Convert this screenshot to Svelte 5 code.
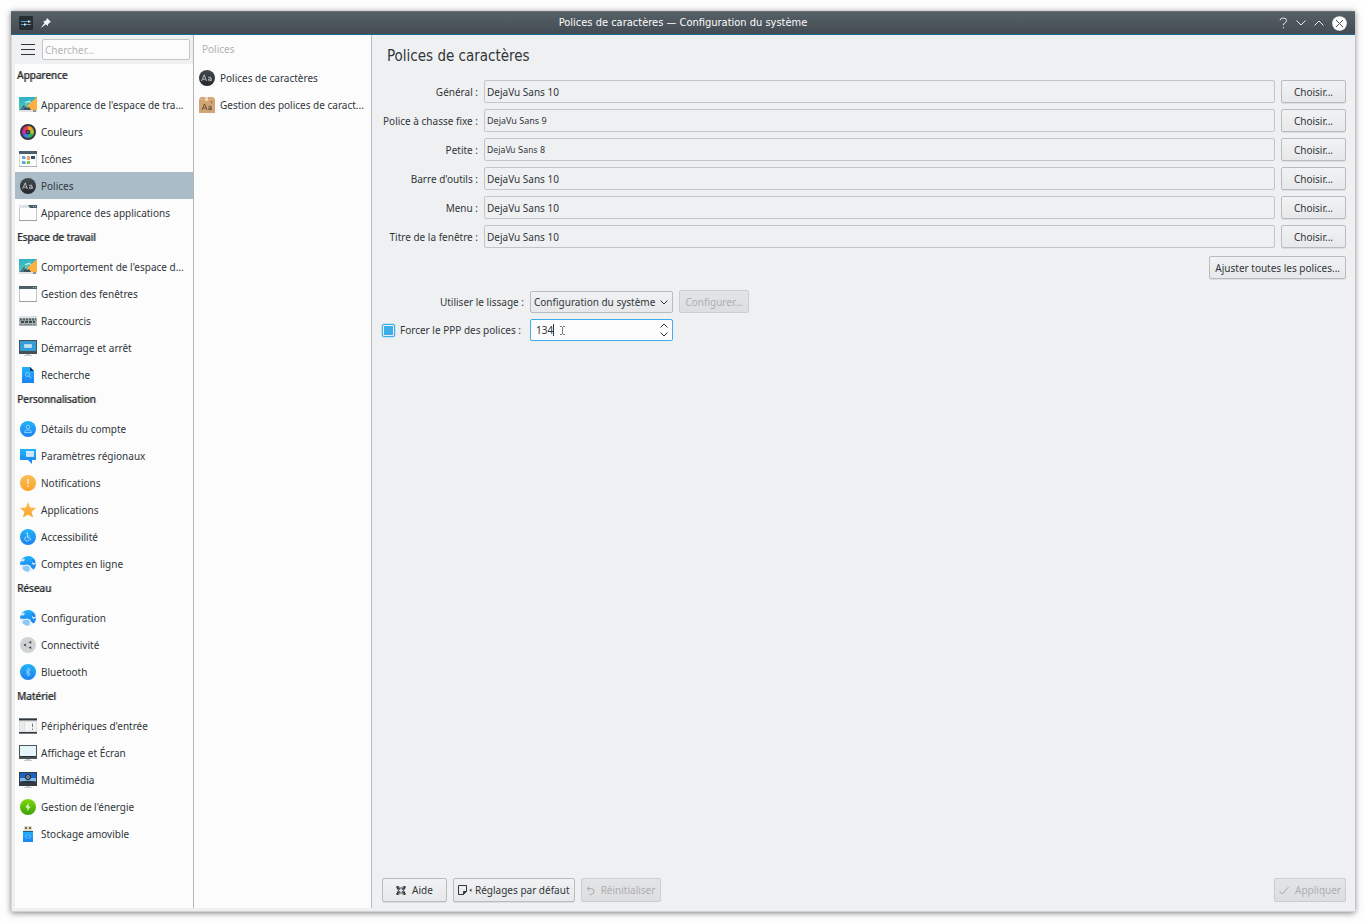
<script>
  const sections = [
    {
      title: 'Apparence',
      items: [
        { icon: 'wallpaper', label: "Apparence de l'espace de tra..." },
        { icon: 'colors', label: 'Couleurs' },
        { icon: 'icons', label: 'Icônes' },
        { icon: 'fonts', label: 'Polices', current: true },
        { icon: 'appstyle', label: 'Apparence des applications' }
      ]
    },
    {
      title: 'Espace de travail',
      items: [
        { icon: 'wallpaper', label: "Comportement de l'espace d..." },
        { icon: 'window', label: 'Gestion des fenêtres' },
        { icon: 'keyboard', label: 'Raccourcis' },
        { icon: 'startup', label: 'Démarrage et arrêt' },
        { icon: 'search', label: 'Recherche' }
      ]
    },
    {
      title: 'Personnalisation',
      items: [
        { icon: 'user', label: 'Détails du compte' },
        { icon: 'locale', label: 'Paramètres régionaux' },
        { icon: 'notify', label: 'Notifications' },
        { icon: 'star', label: 'Applications' },
        { icon: 'access', label: 'Accessibilité' },
        { icon: 'globe', label: 'Comptes en ligne' }
      ]
    },
    {
      title: 'Réseau',
      items: [
        { icon: 'globe', label: 'Configuration' },
        { icon: 'connect', label: 'Connectivité' },
        { icon: 'bluetooth', label: 'Bluetooth' }
      ]
    },
    {
      title: 'Matériel',
      items: [
        { icon: 'input', label: "Périphériques d'entrée" },
        { icon: 'screen', label: 'Affichage et Écran' },
        { icon: 'media', label: 'Multimédia' },
        { icon: 'power', label: "Gestion de l'énergie" },
        { icon: 'usb', label: 'Stockage amovible' }
      ]
    }
  ];

  const fonts = [
    { id: 'general', label: 'Général :', value: 'DejaVu Sans 10', size: 'normal' },
    { id: 'fixed', label: 'Police à chasse fixe :', value: 'DejaVu Sans 9', size: 'medium' },
    { id: 'small', label: 'Petite :', value: 'DejaVu Sans 8', size: 'small' },
    { id: 'toolbar', label: "Barre d'outils :", value: 'DejaVu Sans 10', size: 'normal' },
    { id: 'menu', label: 'Menu :', value: 'DejaVu Sans 10', size: 'normal' },
    { id: 'title', label: 'Titre de la fenêtre :', value: 'DejaVu Sans 10', size: 'normal' }
  ];

  let dpi = $state(134);
  let force = $state(true);
</script>

{#snippet icon(name)}
  <svg class="icon" viewBox="0 0 18 16" width="18" height="16" aria-hidden="true">
    {#if name === 'wallpaper'}
      <rect width="18" height="15" fill="url(#teal)" />
      <path d="M18 0V13H10L8 9Z" fill="#fdb03c" />
      <path d="M1 13L5 8L8 11L10 10L12 13Z" fill="#3b5266" />
      <path d="M2 14L12 2" stroke="#8fe0d6" stroke-width="1" opacity=".6" />
      <path d="M6 5.5L10 4.5L12 5.5" stroke="#e6fbfa" stroke-width="1" fill="none" />
      <rect y="13" width="18" height="2" fill="#dfe3e5" />
      <path d="M14 14H17" stroke="#3c4347" />
    {:else if name === 'colors'}
      <circle cx="9" cy="8" r="8" fill="#34373c" />
      <path d="M9 8V2A6 6 0 0 1 14.2 5Z" fill="#f5a623" />
      <path d="M9 8L14.2 5A6 6 0 0 1 14.2 11Z" fill="#a8c93a" />
      <path d="M9 8L14.2 11A6 6 0 0 1 9 14Z" fill="#2fae6a" />
      <path d="M9 8V14A6 6 0 0 1 3.8 11Z" fill="#3c7de0" />
      <path d="M9 8L3.8 11A6 6 0 0 1 3.8 5Z" fill="#c42fb4" />
      <path d="M9 8L3.8 5A6 6 0 0 1 9 2Z" fill="#e93a5e" />
      <circle cx="9" cy="8" r="2.3" fill="#2b2e33" />
      <circle cx="9" cy="8" r="1" fill="#7b6b84" />
    {:else if name === 'icons'}
      <rect x=".5" y=".5" width="17" height="15" fill="#fafbfb" stroke="#cfd4d6" />
      <rect width="18" height="3" fill="#4d6069" />
      <path d="M0 15.5H18" stroke="#aab2b5" />
      <path d="M3 5H6V8H3ZM3 10H6V13H3Z" fill="#63a4dc" />
      <path d="M6 6H7V8H6ZM6 11H7V13H6Z" fill="#8fbfe8" />
      <rect x="8" y="5" width="3" height="4" fill="#f59b6c" />
      <rect x="8" y="10" width="3" height="3" fill="#80c342" />
      <rect x="12" y="5" width="4" height="3" fill="#31505f" />
    {:else if name === 'fonts'}
      <circle cx="9" cy="8" r="8" fill="url(#dark)" />
      <path d="M3.5 11L6.3 4.8L8.4 11M4.8 9.2H7.6" fill="none" stroke="#c2c6c9" stroke-width=".9" />
      <path d="M10 7.4Q13.2 6 13.2 8.5V11M13.2 8.8Q10 8.6 10.2 10Q10.8 11.6 13.2 10" fill="none" stroke="#c2c6c9" stroke-width=".9" />
    {:else if name === 'appstyle' || name === 'window'}
      <rect x=".5" y=".5" width="17" height="15" fill="#fdfdfd" stroke="#c3c8ca" />
      <rect width="18" height="3" fill={name === 'window' ? '#4d6069' : '#dfe3e5'} />
      {#if name === 'appstyle'}<path d="M9 0H18V3H11Z" fill="#4d6069" />{/if}
      <path d="M14 1.5H15M16 1.5H17" stroke="#a9b7bd" />
      <path d="M0 15.5H18" stroke="#99a2a6" />
    {:else if name === 'keyboard'}
      <rect y="3" width="18" height="2" fill="#dfe6e6" />
      <rect y="5" width="18" height="8" fill="#a9b1b2" />
      <path d="M1 6.5H17" stroke="#566164" stroke-width="2" stroke-dasharray="2 1" />
      <path d="M2 9H16" stroke="#414b4e" stroke-width="2" stroke-dasharray="3 1" />
      <path d="M1 11.5H4M5 11.5H13M14 11.5H17" stroke="#7b8688" />
      <path d="M14 3.5H15M16 3.5H17" stroke="#8fd1b8" />
    {:else if name === 'startup'}
      <rect width="18" height="14" fill="#4a4f54" />
      <rect x="1" y="1" width="16" height="10" fill="#329fd9" />
      <rect x="5" y="4" width="8" height="4" fill="#a9d5ee" />
      <path d="M6 6H12" stroke="#e9f5fb" />
      <path d="M7 14H11V15H13V16H5V15H7Z" fill="#c5cacc" />
    {:else if name === 'search'}
      <path d="M3 0H11L15 4V16H3Z" fill="url(#blue)" />
      <path d="M11 0L15 4H11Z" fill="#1c3144" />
      <circle cx="8.5" cy="7.5" r="2" fill="none" stroke="#9bdcff" stroke-width=".8" />
      <path d="M10 9L12.2 11.2" stroke="#9bdcff" stroke-width=".8" />
    {:else if name === 'user'}
      <circle cx="9" cy="8" r="8" fill="url(#blue)" />
      <circle cx="9" cy="6" r="1.8" fill="none" stroke="#a0d8ff" stroke-width=".8" />
      <path d="M5.5 11.5Q5.5 9 8 9H10Q12.5 9 12.5 11.5Z" fill="none" stroke="#a0d8ff" stroke-width=".8" />
    {:else if name === 'locale'}
      <path d="M1 1H17V12H13V16L9 12H1Z" fill="url(#blue)" />
      <rect x="7" y="3" width="8" height="6" fill="#bfe0fb" />
      <path d="M7 4H15M7 7H15" stroke="#e4f2fd" />
    {:else if name === 'notify'}
      <circle cx="9" cy="8" r="8" fill="url(#amber)" />
      <path d="M9 4V9M9 10.5V12" stroke="#fff1d6" stroke-width="1.4" />
    {:else if name === 'star'}
      <path d="M9 0L11.2 5.5L17 6L12.6 9.8L14 15.5L9 12.4L4 15.5L5.4 9.8L1 6L6.8 5.5Z" fill="url(#amber)" />
    {:else if name === 'access'}
      <circle cx="9" cy="8" r="8" fill="url(#blue)" />
      <circle cx="8.2" cy="4.4" r=".9" fill="#b9e4ff" />
      <path d="M8.4 5.5V8.8H10.6L12 11.2M8.5 7H10.6M7.2 7.6A2.3 2.3 0 1 0 10.2 10.6" fill="none" stroke="#b9e4ff" stroke-width=".9" />
    {:else if name === 'globe'}
      <circle cx="9" cy="8" r="8" fill="#e3f2fc" />
      <path d="M2.4 3.6Q5 0 10 0Q14.6 .8 16.4 5L13 6.4L14 9L17 7.5Q17.2 11 14.8 13.4L12.6 12L11 9.6L8 8.6L5 9L1 8.4Q1 6.6 1.6 5.2L5 5.6Z" fill="url(#blue)" />
      <path d="M4.4 10.2L9 9.8L11 12L9.8 15.8Q5.8 15.8 3.4 12.8Z" fill="#8cc8f7" />
      <path d="M13 3L16 4.5L16.6 7L14 7Z" fill="#2384ea" />
      <path d="M2 3.8L5 2.4L6 4L4 5.2Z" fill="#d9edfb" />
    {:else if name === 'connect'}
      <circle cx="9" cy="8" r="8" fill="#d0d4d6" />
      <path d="M5 8L11 4.8M5 8L11 11.2" stroke="#bcc2c5" />
      <path d="M4.8 8L6.5 7V9ZM10.2 5.4L12 4.4V6.2ZM10.2 10.6L12 9.8V11.6Z" fill="#31373b" stroke="#31373b" stroke-width=".5" />
    {:else if name === 'bluetooth'}
      <circle cx="9" cy="8" r="8" fill="url(#blue)" />
      <path d="M6.8 5.8L11.2 10.2L9 12.2V3.8L11.2 5.8L6.8 10.2" fill="none" stroke="#a9dcff" stroke-width=".8" />
    {:else if name === 'input'}
      <rect width="18" height="16" fill="#dcdfe0" />
      <rect width="18" height="2.4" fill="#31363b" />
      <path d="M0 .5H18" stroke="#6b7a80" />
      <rect x="1" y="4" width="4" height="9" fill="#e9ebeb" />
      <rect x="6" y="4" width="11" height="9" fill="#f3f4f4" />
      <path d="M13.5 5.5V9M13.5 10.5V12" stroke="#777e82" />
      <path d="M0 14.8H18" stroke="#353b40" stroke-width="1.6" />
    {:else if name === 'screen'}
      <rect width="18" height="14" fill="#4d5358" />
      <rect x="1" y="1" width="16" height="10" fill="#e5f6fb" />
      <path d="M1 11.5H17" stroke="#2c3034" />
      <path d="M7 14H11V15H13V16H5V15H7Z" fill="#c5cacc" />
    {:else if name === 'media'}
      <rect width="18" height="14" fill="#353b41" />
      <rect x="1" y="1" width="16" height="6" fill="#1d61c5" />
      <rect x="1" y="6" width="16" height="4" fill="#7eb9e8" />
      <path d="M1 11V9.6L9 8.8L17 9.6V11Z" fill="#273341" />
      <circle cx="9" cy="5" r="2.3" fill="#e8edf0" stroke="#20262b" stroke-width="1.3" />
      <path d="M8.4 3.8L10.6 5L8.4 6.2Z" fill="#20262b" />
      <path d="M7 14H11V15H13V16H5V15H7Z" fill="#c5cacc" />
    {:else if name === 'power'}
      <circle cx="9" cy="8" r="8" fill="url(#green)" />
      <path d="M9.6 4L6.4 8.6H8.6L8.2 12L11.6 7.4H9.4Z" fill="#e7fbd3" />
    {:else if name === 'usb'}
      <rect x="5" y="0" width="8" height="5" fill="#e2dfcf" />
      <path d="M6 1H8V3H6ZM10 1H12V3H10Z" fill="#6d664f" />
      <rect x="4" y="5" width="10" height="11" fill="url(#blue)" />
      <path d="M4 5.5H14" stroke="#265a86" />
      <path d="M8 8.5L6.5 10.5L8 12.5M10 8.5L11.5 10.5L10 12.5" fill="none" stroke="#8ad3ff" stroke-width=".8" />
    {:else if name === 'fontbox'}
      <path d="M1 2L3 0H15L17 2V16H1Z" fill="#d3a574" />
      <path d="M1 2.5H17" stroke="#dcb184" />
      <rect x="7" y="0" width="3" height="4" fill="#f0d9b8" />
      <path d="M4 13L6.6 7L9 13M5 11H8.2" fill="none" stroke="#5b4a3a" stroke-width=".9" />
      <path d="M10.4 9.6Q13.2 8.2 13.2 10.5V13M13.2 11Q10 10.6 10.4 12.2Q11 13.6 13.2 12.2" fill="none" stroke="#5b4a3a" stroke-width=".9" />
      <path d="M13.5 4V6.5" stroke="#8d6d4c" />
    {/if}
  </svg>
{/snippet}

<svg class="defs" width="0" height="0" aria-hidden="true">
  <defs>
    <linearGradient id="teal" x2="0" y2="1"><stop stop-color="#2eb3c3" /><stop offset="1" stop-color="#5ac7b4" /></linearGradient>
    <linearGradient id="dark" x2="0" y2="1"><stop stop-color="#454b50" /><stop offset="1" stop-color="#24282c" /></linearGradient>
    <linearGradient id="blue" x2="0" y2="1"><stop stop-color="#1fb4f9" /><stop offset="1" stop-color="#1d80f0" /></linearGradient>
    <linearGradient id="amber" x2="0" y2="1"><stop stop-color="#fbbd55" /><stop offset="1" stop-color="#f9a52b" /></linearGradient>
    <linearGradient id="green" x2="0" y2="1"><stop stop-color="#7fd80b" /><stop offset="1" stop-color="#3d9f07" /></linearGradient>
  </defs>
</svg>

<div class="window">
  <header class="titlebar">
    <div class="side">
      <svg width="14" height="14" viewBox="0 0 14 14" aria-hidden="true">
        <rect width="14" height="14" rx="1" fill="#262d33" />
        <path d="M2 5.5H12M2 8.5H12" stroke="#83939d" />
        <path d="M2 5.5H8M2 8.5H5" stroke="#3daee9" />
        <path d="M9 4.5H10.5V6.5H9ZM5 7.5H6.5V9.5H5Z" fill="#fff" />
      </svg>
      <button class="plain" aria-label="Épingler">
        <svg width="10" height="10" viewBox="0 0 10 10"><path d="M6 0L10 4L8.6 4.4L7 6.2L6.8 8L4.8 6.2L.6 9.6L0 9.4L3.6 5L1.8 3.4L3.8 3.2L5.6 1.4Z" fill="#fcfcfc" /></svg>
      </button>
    </div>
    <h1>Polices de caractères — Configuration du système</h1>
    <div class="side controls">
      <button class="plain" aria-label="Aide contextuelle">
        <svg width="9" height="12" viewBox="0 0 9 12"><path d="M1 3.4Q1.2 1 4.2 1Q7.6 1 7.6 3.6Q7.6 5 5.6 6Q4.4 6.8 4.4 8.4M4.4 10V11.2" fill="none" stroke="#e6e8e9" /></svg>
      </button>
      <button class="plain" aria-label="Réduire">
        <svg width="10" height="6" viewBox="0 0 10 6"><path d="M.5 .5L5 5L9.5 .5" fill="none" stroke="#e6e8e9" /></svg>
      </button>
      <button class="plain" aria-label="Maximiser">
        <svg width="10" height="6" viewBox="0 0 10 6"><path d="M.5 5.5L5 1L9.5 5.5" fill="none" stroke="#e6e8e9" /></svg>
      </button>
      <button class="plain" aria-label="Fermer">
        <svg width="15" height="15" viewBox="0 0 15 15"><circle cx="7.5" cy="7.5" r="7.3" fill="#fcfcfc" /><path d="M4 4L11 11M11 4L4 11" stroke="#4b545b" /></svg>
      </button>
    </div>
  </header>

  <div class="body">
    <nav class="sidebar" aria-label="Catégories">
      <div class="search">
        <button class="plain" aria-label="Menu">
          <svg width="14" height="13" viewBox="0 0 14 13"><path d="M0 1.5H14M0 6.5H14M0 11.5H14" stroke="#31363b" /></svg>
        </button>
        <input type="text" placeholder="Chercher..." aria-label="Chercher" />
      </div>
      <div class="list">
        {#each sections as section}
          <h2>{section.title}</h2>
          {#each section.items as item}
            <a href="#top" class="item" class:current={item.current}>{@render icon(item.icon)}<span>{item.label}</span></a>
          {/each}
        {/each}
      </div>
    </nav>

    <nav class="modules" aria-label="Polices">
      <h2>Polices</h2>
      <a href="#top" class="item">{@render icon('fonts')}<span>Polices de caractères</span></a>
      <a href="#top" class="item">{@render icon('fontbox')}<span>Gestion des polices de caract...</span></a>
    </nav>

    <main>
      <h2>Polices de caractères</h2>
      <div class="fonts">
        {#each fonts as font}
          <label for={font.id}>{font.label}</label>
          <input id={font.id} class={font.size} type="text" readonly value={font.value} />
          <button class="btn">Choisir...</button>
        {/each}
      </div>
      <div class="adjust"><button class="btn">Ajuster toutes les polices...</button></div>

      <div class="options">
        <label for="aa" class="right">Utiliser le lissage :</label>
        <div class="pick">
          <select id="aa">
            <option>Configuration du système</option>
          </select>
          <svg width="8" height="5" viewBox="0 0 8 5" aria-hidden="true"><path d="M.5 .5L4 4L7.5 .5" fill="none" stroke="#31363b" /></svg>
        </div>
        <button class="btn configure" disabled>Configurer...</button>

        <label class="check"><input type="checkbox" bind:checked={force} />Forcer le PPP des polices :</label>
        <div class="spin">
          <input type="text" inputmode="numeric" aria-label="PPP des polices" bind:value={dpi} />
          <i class="caret"></i>
          <svg class="pointer" width="5" height="9" viewBox="0 0 5 9" aria-hidden="true"><path d="M0 .5H2M3 .5H5M0 8.5H2M3 8.5H5M2.5 1V8" stroke="#77797c" /></svg>
          <div class="steps">
            <button class="plain" aria-label="Augmenter" onclick={() => (dpi = Number(dpi) + 1)}>
              <svg width="8" height="5" viewBox="0 0 8 5"><path d="M.5 4.5L4 1L7.5 4.5" fill="none" stroke="#31363b" /></svg>
            </button>
            <button class="plain" aria-label="Diminuer" onclick={() => (dpi = Number(dpi) - 1)}>
              <svg width="8" height="5" viewBox="0 0 8 5"><path d="M.5 .5L4 4L7.5 .5" fill="none" stroke="#31363b" /></svg>
            </button>
          </div>
        </div>
      </div>

      <footer>
        <button class="btn help">
          <svg width="10" height="9" viewBox="0 0 10 9" aria-hidden="true"><path d="M0 1H3.5M6.5 1H10M0 8H3.5M6.5 8H10M1.5 0V3.4M8.5 0V3.4M1.5 5.6V9M8.5 5.6V9" stroke="#31363b" stroke-width="1.2" /><path d="M3.5 2H6.5M3.5 7H6.5M2.5 3.4V5.6M7.5 3.4V5.6" stroke="#31363b" stroke-width=".9" /><path d="M2 1.8L4 3.6M8 1.8L6 3.6M2 7.2L4 5.4M8 7.2L6 5.4" stroke="#31363b" stroke-width="1.2" /></svg>
          Aide
        </button>
        <button class="btn defaults">
          <svg width="14" height="10" viewBox="0 0 14 10" aria-hidden="true"><path d="M5.5 9.5H.5V.5H8.5V6.5ZV6.5H8.5" fill="none" stroke="#31363b" /><path d="M5.5 9.5V6.5H8.5Z" fill="#31363b" /><path d="M13.4 3.6V7L11.4 5.3Z" fill="#31363b" /></svg>
          Réglages par défaut
        </button>
        <button class="btn reset" disabled>
          <svg width="9" height="9" viewBox="0 0 9 9" aria-hidden="true"><path d="M3.4 .4L1 2.6L3.4 4.8M1 2.6H5.2Q8 2.8 8 5.4Q8 8 5.2 8.4H3.4" fill="none" stroke="#a6a8aa" /></svg>
          Réinitialiser
        </button>
        <button class="btn apply" disabled>
          <svg width="10" height="9" viewBox="0 0 10 9" aria-hidden="true"><path d="M.5 5L3.4 8L9.5 1" fill="none" stroke="#a6a8aa" /></svg>
          Appliquer
        </button>
      </footer>
    </main>
  </div>
</div>

<style>
  :global(body) {
    margin: 0;
    background: #fefefe;
  }
  :global(#app) {
    display: flow-root;
  }
  .defs {
    position: absolute;
  }
  .window {
    box-sizing: border-box;
    display: flex;
    flex-direction: column;
    min-height: calc(100vh - 22px);
    margin: 11px;
    color: #31363b;
    background: #eff0f1;
    font: 10px/14px 'Noto Sans', 'DejaVu Sans', sans-serif;
    box-shadow: 0 1px 6px rgba(0, 0, 0, 0.5);
  }
  input,
  select,
  button {
    box-sizing: border-box;
    margin: 0;
    color: inherit;
    font: inherit;
    outline: none;
  }
  svg {
    display: block;
    flex: none;
  }
  h1,
  h2 {
    margin: 0;
    font: inherit;
  }
  .plain {
    display: block;
    padding: 0;
    border: 0;
    background: none;
  }
  .titlebar {
    box-sizing: border-box;
    display: flex;
    align-items: center;
    height: 24px;
    padding: 0 8px;
    color: #fcfcfc;
    background: linear-gradient(#566067, #434c52);
    border-top: 1px solid #68737a;
    border-bottom: 1px solid #1f6996;
  }
  .titlebar h1 {
    font: 11px/16px 'DejaVu Sans Condensed', 'DejaVu Sans', sans-serif;
  }
  .side {
    display: flex;
    flex: 1;
    align-items: center;
    gap: 8px;
  }
  .controls {
    justify-content: flex-end;
  }
  .body {
    display: flex;
    flex: 1;
    padding: 0 0 0 3px;
    border-left: 1px solid #d5d7d9;
    border-bottom: 1px solid #cfd1d3;
  }
  .sidebar {
    display: flex;
    flex: none;
    flex-direction: column;
    box-sizing: border-box;
    width: 179px;
    margin-bottom: 3px;
    border-right: 1px solid #b3b5b7;
  }
  .search {
    display: flex;
    align-items: center;
    gap: 7px;
    height: 29px;
    padding: 0 3px 0 6px;
  }
  .search input {
    flex: 1;
    min-width: 0;
    height: 21px;
    padding: 0 2px;
    border: 1px solid #c4c6c8;
    border-radius: 2px;
    background: #fcfcfc;
  }
  .search input::placeholder {
    color: #b3b5b7;
    opacity: 1;
  }
  .list {
    flex: 1;
    background: #fcfcfc;
  }
  .list h2 {
    height: 23px;
    padding: 4px 2px 0;
    color: #232629;
    text-shadow: 1px 0 rgba(35, 38, 41, 0.5);
  }
  .item {
    display: flex;
    align-items: center;
    gap: 4px;
    height: 27px;
    padding-left: 4px;
    color: inherit;
    text-decoration: none;
    white-space: nowrap;
  }
  .item.current {
    background: #a9bcc8;
  }
  .modules {
    flex: none;
    box-sizing: border-box;
    width: 178px;
    margin-bottom: 3px;
    background: #fcfcfc;
    border-right: 1px solid #b9bbbd;
  }
  .modules h2 {
    height: 22px;
    padding: 7px 8px 0;
    color: #b0b2b4;
  }
  main {
    display: flex;
    flex: 1;
    flex-direction: column;
    min-width: 0;
    padding: 11px 9px 9px 10px;
  }
  main h2 {
    padding-left: 5px;
    font: 15px/20px 'DejaVu Sans Condensed', 'DejaVu Sans', sans-serif;
  }
  .fonts {
    display: grid;
    grid-template-columns: 96px 1fr 65px;
    gap: 6px;
    align-items: center;
    margin-top: 14px;
  }
  .fonts label {
    justify-self: end;
    white-space: nowrap;
  }
  .fonts input {
    width: 100%;
    height: 23px;
    padding: 0 2px;
    border: 1px solid #c3c5c7;
    border-radius: 2px;
    background: none;
  }
  .fonts .medium {
    font-size: 9px;
  }
  .fonts .small {
    font: 9px/14px 'DejaVu Sans Condensed', 'DejaVu Sans', sans-serif;
  }
  .btn {
    display: flex;
    align-items: center;
    justify-content: center;
    gap: 6px;
    height: 23px;
    padding: 0 5px;
    border: 1px solid #b9bbbd;
    border-radius: 2px;
    background: linear-gradient(#f1f2f3, #e7e8e9);
    box-shadow: 0 1px rgba(0, 0, 0, 0.08);
    white-space: nowrap;
  }
  .btn:disabled {
    color: #adafb1;
    border-color: #cbcdcf;
    background: linear-gradient(#e3e4e6, #dddee0);
    box-shadow: none;
  }
  .adjust {
    display: flex;
    justify-content: flex-end;
    margin-top: 8px;
  }
  .options {
    display: grid;
    grid-template-columns: 142px 143px auto;
    justify-content: start;
    align-items: center;
    gap: 6px;
    margin-top: 11px;
  }
  .right {
    justify-self: end;
  }
  .pick,
  .spin {
    position: relative;
    height: 22px;
  }
  .pick svg {
    position: absolute;
    top: 9px;
    right: 5px;
    pointer-events: none;
  }
  select {
    width: 100%;
    height: 22px;
    padding: 0 16px 0 3px;
    border: 1px solid #b9bbbd;
    border-radius: 2px;
    appearance: none;
    background: linear-gradient(#f1f2f3, #e7e8e9);
  }
  .configure {
    width: 70px;
  }
  .check {
    display: flex;
    align-items: center;
    gap: 5px;
    white-space: nowrap;
  }
  .check input {
    width: 13px;
    height: 13px;
    border: 1px solid #3daee9;
    border-radius: 2px;
    appearance: none;
    background: #eff0f1;
    box-shadow: 0 0 0 1px #c5e3f3;
  }
  .check input:checked {
    padding: 1px;
    background: #3daee9 content-box;
  }
  .spin input {
    width: 100%;
    height: 22px;
    padding: 0 20px 0 5px;
    border: 1px solid #3daee9;
    border-radius: 2px;
    background: #fcfcfc;
  }
  .caret {
    position: absolute;
    top: 5px;
    left: 23px;
    width: 1px;
    height: 12px;
    background: #31363b;
  }
  .pointer {
    position: absolute;
    top: 7px;
    left: 30px;
  }
  .steps {
    position: absolute;
    top: 4px;
    right: 5px;
    display: flex;
    flex-direction: column;
    gap: 4px;
  }
  footer {
    display: flex;
    gap: 6px;
    margin-top: auto;
  }
  footer .btn {
    height: 24px;
    padding: 0 4px;
  }
  .help {
    min-width: 65px;
  }
  .defaults {
    gap: 3px;
  }
  .reset {
    min-width: 80px;
  }
  .apply {
    margin-left: auto;
  }
</style>
